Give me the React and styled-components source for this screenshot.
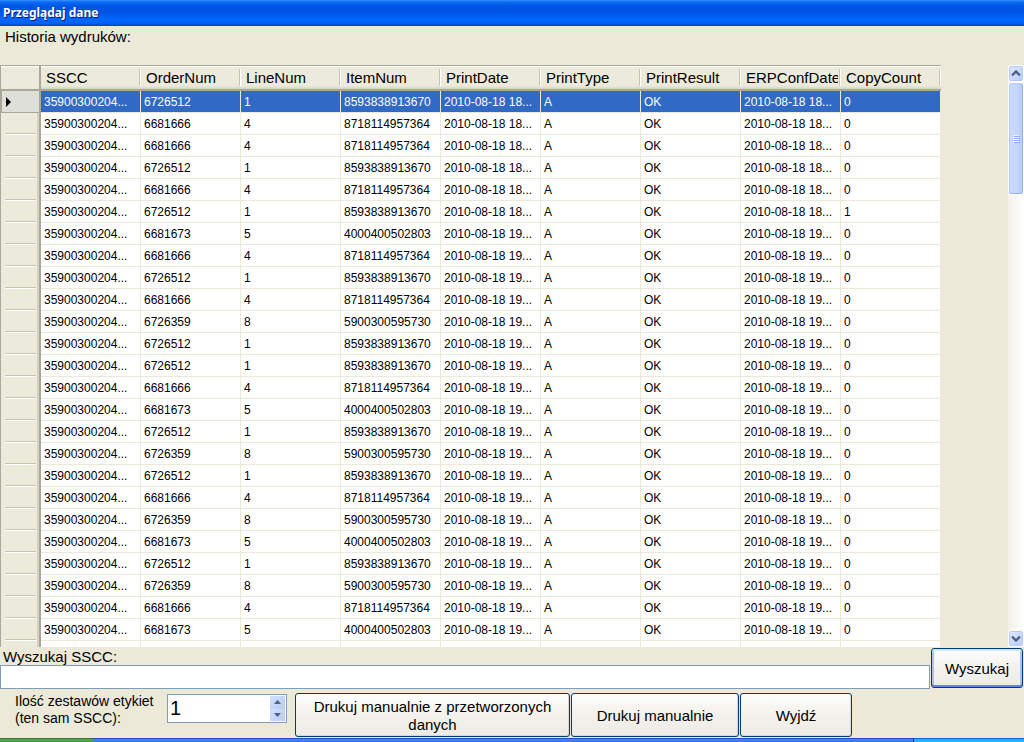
import React, { useState } from 'react'
import styled, { createGlobalStyle } from 'styled-components'

const GlobalStyle = createGlobalStyle`
  * {
    box-sizing: border-box;
  }
  body {
    margin: 0;
    background: #ece9d8;
    color: #000;
    font-family: 'Liberation Sans', Arial, sans-serif;
    font-size: 15px;
  }
  button, input {
    font: inherit;
    color: inherit;
  }
`

const Window = styled.div`
  display: flex;
  flex-direction: column;
  height: 100vh;
  overflow: hidden;
`

const TitleBar = styled.h1`
  flex: none;
  margin: 0;
  padding: 0 3px;
  height: 26px;
  line-height: 26px;
  font-family: 'Noto Sans', 'Open Sans', sans-serif;
  font-size: 12px;
  font-weight: 700;
  color: #fff;
  text-shadow: 1px 1px 0 #0a1883;
  background: linear-gradient(#3a93ff 0, #0a6cf8 2px, #0055e5 6px, #0055e5 12px, #0066ff 20px, #0062f8 23px, #0042c4 26px);
`

const Heading = styled.h2`
  flex: none;
  margin: 0;
  padding: 0 5px;
  height: 39px;
  font-size: 15px;
  font-weight: 400;
  line-height: 22px;
`

const GridPane = styled.section`
  display: flex;
  flex: 1;
  min-height: 0;
`

const TableWrap = styled.div`
  flex: 1;
  min-width: 0;
  overflow: hidden;
`

const Table = styled.table`
  table-layout: fixed;
  width: 941px;
  border-collapse: separate;
  border-spacing: 0;
`

const HeadCell = styled.th`
  height: 26px;
  padding: 0;
  border-top: 1px solid #aca899;
  border-bottom: 2px solid #aca899;
  background: linear-gradient(#fff 0, #fff 1px, #ebeadb 1px, #ebeadb 20px, #d6d2c2 23px);
  font-weight: 400;
  text-align: left;
`

const HeadLabel = styled.div`
  height: 17px;
  padding: 0 2px 0 5px;
  line-height: 17px;
  white-space: nowrap;
  border-right: 1px solid #fff;
  box-shadow: inset -1px 0 0 #c7c5b2;
`

const HeadText = styled.span`
  display: block;
  overflow: hidden;
`

const CornerCell = styled.th`
  width: 41px;
  padding: 0;
  border: 1px solid #aca899;
  border-right-width: 2px;
  border-bottom-width: 2px;
  background: #ebeadb;
  box-shadow: inset 0 1px 0 #fff;
`

const RowHeader = styled.th`
  height: 22px;
  padding: 0 0 0 4px;
  border-left: 1px solid #aca899;
  border-right: 2px solid #aca899;
  background: ${props => props.$active ? '#dedfd8' : '#ebeadb'};
  box-shadow: ${props => props.$active ? 'inset 1px -1px 0 #aca899' : 'inset -2px 0 0 #d6d2c2'};
  text-align: left;
`

const RowRule = styled.div`
  height: 22px;
  margin-right: 3px;
  border-bottom: 1px solid #fff;
  box-shadow: inset 0 -1px 0 #c7c5b2;
`

const Marker = styled.svg`
  display: block;
`

const Cell = styled.td`
  height: 22px;
  padding: 0 0 0 3px;
  overflow: hidden;
  border-right: 1px solid #ece9d8;
  border-bottom: 1px solid #ece9d8;
  background: ${props => props.$active ? '#316ac5' : '#fff'};
  color: ${props => props.$active ? '#fff' : '#000'};
  font-size: 12px;
  white-space: nowrap;
`

const ScrollBar = styled.div`
  display: flex;
  flex: none;
  flex-direction: column;
  width: 16px;
  background: linear-gradient(to right, #f3f1ec, #fefefb);
`

const ScrollButton = styled.button`
  display: flex;
  align-items: center;
  justify-content: center;
  flex: none;
  height: 17px;
  padding: 0;
  border: 1px solid #fff;
  border-radius: 3px;
  background: linear-gradient(135deg, #e0e9ff, #b9cbf7);
  box-shadow: inset 0 0 0 1px #b4c8f6;
`

const ScrollThumb = styled.div`
  display: flex;
  align-items: center;
  justify-content: center;
  flex: none;
  height: 113px;
  border: 1px solid #fff;
  border-radius: 3px;
  background: linear-gradient(to right, #cbdafe, #c5d5fc 60%, #b6c9f7);
  box-shadow: inset 0 -1px 0 #98b0e8, inset -1px 0 0 #98b0e8, inset 0 0 0 1px #b4c8f6;
`

const ScrollTrack = styled.div`
  flex: 1;
`

const SearchRow = styled.form`
  display: flex;
  flex: none;
  align-items: flex-start;
  gap: 1px;
  height: 44px;
  padding-right: 1px;
`

const SearchField = styled.div`
  display: flex;
  flex: 1;
  flex-direction: column;
`

const SearchLabel = styled.label`
  height: 18px;
  padding-left: 3px;
  line-height: 20px;
`

const SearchInput = styled.input`
  width: 100%;
  height: 24px;
  padding: 0 4px;
  border: 1px solid #7f9db9;
  background: #fff;
  outline: none;
`

const XpButton = styled.button`
  flex: none;
  width: ${props => props.$width}px;
  height: ${props => props.$primary ? 40 : 44}px;
  margin-top: ${props => props.$primary ? 1 : 0}px;
  padding: 2px 8px 0;
  border: 1px solid #003c74;
  border-radius: 3px;
  background: linear-gradient(#fefefe, #f4f3ee 40%, #ecebe6);
  box-shadow: ${props => props.$primary
    ? 'inset 0 2px 0 #cee7ff, inset 0 -2px 0 #6982ee, inset 2px 0 0 #a6c4f2, inset -2px 0 0 #a6c4f2'
    : 'inset -1px -1px 0 #dcd8cc'};
  line-height: 18px;
`

const ActionRow = styled.div`
  display: flex;
  flex: none;
  align-items: flex-start;
  gap: 1px;
  height: 47px;
  padding: 2px 0 0 15px;
`

const CopiesLabel = styled.label`
  flex: none;
  width: 151px;
  font-size: 14px;
  line-height: 17px;
`

const Spinner = styled.div`
  display: flex;
  flex: none;
  width: 120px;
  height: 29px;
  margin: 1px 7px 0 0;
  padding: 1px;
  border: 1px solid #7f9db9;
  background: #fff;
`

const SpinnerInput = styled.input`
  flex: 1;
  min-width: 0;
  padding: 0 1px;
  border: 0;
  outline: none;
  background: none;
  font-size: 20px;
  appearance: textfield;
  &::-webkit-inner-spin-button {
    appearance: none;
  }
`

const SpinnerButtons = styled.div`
  display: flex;
  flex-direction: column;
  width: 15px;
`

const SpinButton = styled.button`
  display: flex;
  flex: 1;
  align-items: center;
  justify-content: center;
  padding: 0;
  border: 0;
  background: linear-gradient(135deg, #d3e0ff, #b9cbf7);
`

const TaskBar = styled.div`
  display: flex;
  flex: none;
  height: 4px;
  background: linear-gradient(#1f4fc0 0, #1f4fc0 1px, #4a8df0 1px, #3272e0 4px);
`

const StartEdge = styled.div`
  width: 94px;
  border-radius: 0 4px 0 0;
  background: linear-gradient(#2f6e2f, #5eac56 2px, #3f8f3f);
`

const TrayEdge = styled.div`
  width: 111px;
  margin-left: auto;
  border-left: 1px solid #0a3a90;
  background: linear-gradient(#0d6ccd 0, #0d6ccd 1px, #18b8f5 1px);
`

const columns = ['SSCC', 'OrderNum', 'LineNum', 'ItemNum', 'PrintDate', 'PrintType', 'PrintResult', 'ERPConfDate', 'CopyCount']

const items = {
  a: ['6726512', '1', '8593838913670'],
  b: ['6681666', '4', '8718114957364'],
  c: ['6681673', '5', '4000400502803'],
  d: ['6726359', '8', '5900300595730']
}

const rows = [...'abbabacbabdaabcadabdcadbc'].map((key, i) => {
  const date = `2010-08-18 ${i < 6 ? 18 : 19}...`
  return ['35900300204...', ...items[key], date, 'A', 'OK', date, i === 5 ? '1' : '0']
})

const Chevron = ({ up }) => (
  <svg width="10" height="7" viewBox="0 0 10 7" aria-hidden="true">
    <path d={up ? 'M1 5.5 5 1.5 9 5.5' : 'M1 1.5 5 5.5 9 1.5'} fill="none" stroke="#4d6185" strokeWidth="2.4" />
  </svg>
)

const Arrow = ({ up }) => (
  <svg width="7" height="4" viewBox="0 0 7 4" aria-hidden="true">
    <path d={up ? 'M0 4 3.5 0 7 4Z' : 'M0 0H7L3.5 4Z'} fill="#4d6185" />
  </svg>
)

const HistoryTable = () => (
  <Table>
    <colgroup>
      <col style={{ width: 41 }} />
      {columns.map(name => <col key={name} />)}
    </colgroup>
    <thead>
      <tr>
        <CornerCell />
        {columns.map(name => (
          <HeadCell key={name} scope="col">
            <HeadLabel><HeadText>{name}</HeadText></HeadLabel>
          </HeadCell>
        ))}
      </tr>
    </thead>
    <tbody>
      {rows.map((row, i) => (
        <tr key={i}>
          <RowHeader $active={i === 0}>
            {i === 0
              ? <Marker width="7" height="12" viewBox="0 0 7 12"><path d="M1 1 6 6 1 11Z" /></Marker>
              : <RowRule />}
          </RowHeader>
          {row.map((value, j) => <Cell key={j} $active={i === 0}>{value}</Cell>)}
        </tr>
      ))}
      <tr>
        <RowHeader />
        {columns.map(name => <Cell key={name} />)}
      </tr>
    </tbody>
  </Table>
)

const App = () => {
  const [sscc, setSscc] = useState('')
  const [copies, setCopies] = useState(1)

  return (
    <Window>
      <GlobalStyle />
      <TitleBar>Przeglądaj dane</TitleBar>
      <Heading>Historia wydruków:</Heading>
      <GridPane>
        <TableWrap><HistoryTable /></TableWrap>
        <ScrollBar>
          <ScrollButton type="button" aria-label="W górę"><Chevron up /></ScrollButton>
          <ScrollThumb>
            <svg width="7" height="8" viewBox="0 0 7 8" aria-hidden="true">
              <path d="M0 .5H6M0 2.5H6M0 4.5H6M0 6.5H6" stroke="#eef4fe" />
              <path d="M1 1.5H7M1 3.5H7M1 5.5H7M1 7.5H7" stroke="#8cb0f8" />
            </svg>
          </ScrollThumb>
          <ScrollTrack />
          <ScrollButton type="button" aria-label="W dół"><Chevron /></ScrollButton>
        </ScrollBar>
      </GridPane>
      <SearchRow onSubmit={e => e.preventDefault()}>
        <SearchField>
          <SearchLabel htmlFor="sscc">Wyszukaj SSCC:</SearchLabel>
          <SearchInput id="sscc" value={sscc} onChange={e => setSscc(e.target.value)} />
        </SearchField>
        <XpButton $primary $width={92}>Wyszukaj</XpButton>
      </SearchRow>
      <ActionRow>
        <CopiesLabel htmlFor="copies">Ilość zestawów etykiet<br />(ten sam SSCC):</CopiesLabel>
        <Spinner>
          <SpinnerInput id="copies" type="number" min="1" value={copies} onChange={e => setCopies(Number(e.target.value))} />
          <SpinnerButtons>
            <SpinButton type="button" aria-label="Więcej" onClick={() => setCopies(copies + 1)}><Arrow up /></SpinButton>
            <SpinButton type="button" aria-label="Mniej" onClick={() => setCopies(Math.max(1, copies - 1))}><Arrow /></SpinButton>
          </SpinnerButtons>
        </Spinner>
        <XpButton type="button" $width={275}>Drukuj manualnie z przetworzonych danych</XpButton>
        <XpButton type="button" $width={168}>Drukuj manualnie</XpButton>
        <XpButton type="button" $width={112}>Wyjdź</XpButton>
      </ActionRow>
      <TaskBar>
        <StartEdge />
        <TrayEdge />
      </TaskBar>
    </Window>
  )
}

export default App
